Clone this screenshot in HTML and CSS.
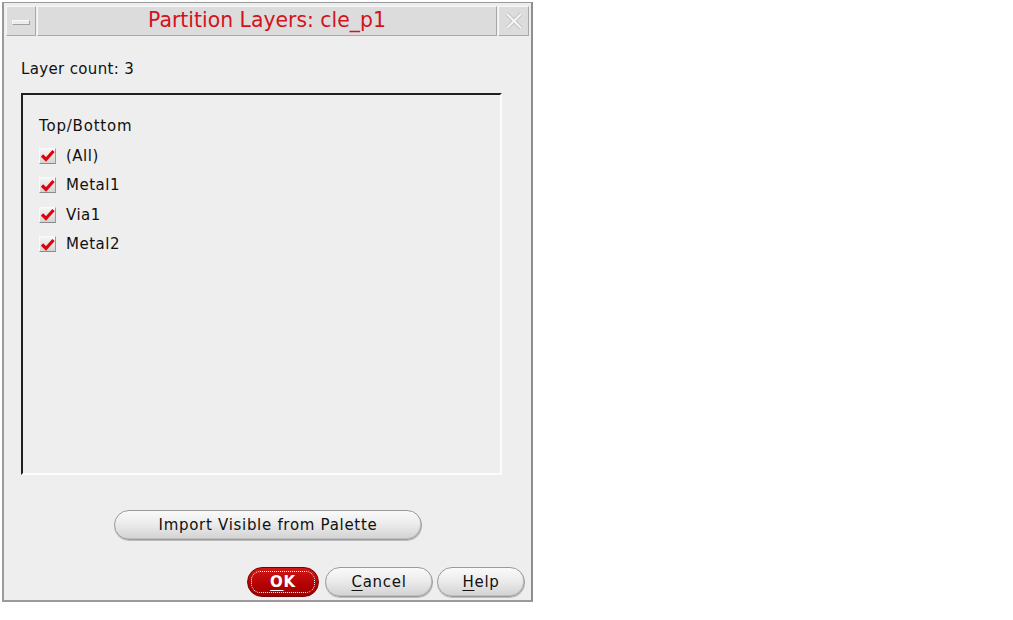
FILE: index.html
```html
<!DOCTYPE html>
<html>
<head>
<meta charset="utf-8">
<link rel="stylesheet" href="styles.css">
</head>
<body>
<div class="window">
  <div class="titlebar">
    <div class="tb-btn tb-min"><span class="min-bar"></span></div>
    <div class="tb-title">Partition Layers: cle_p1</div>
    <div class="tb-btn tb-close">
      <svg width="22" height="22" viewBox="0 0 22 22"><path d="M4 4 L18 18 M18 4 L4 18" stroke="#c4c4c4" stroke-width="4"/><path d="M4 4 L18 18 M18 4 L4 18" stroke="#f4f4f4" stroke-width="2"/></svg>
    </div>
  </div>
  <div class="body">
    <div class="count">Layer count: 3</div>
    <div class="panel">
      <div class="group-label">Top/Bottom</div>
      <div class="check-row"><span class="box"><svg width="15" height="13" viewBox="0 0 15 13"><path d="M2 6.5 L6 10.5 L13.5 2" fill="none" stroke="#e0000c" stroke-width="3.2"/></svg></span><span>(All)</span></div>
      <div class="check-row"><span class="box"><svg width="15" height="13" viewBox="0 0 15 13"><path d="M2 6.5 L6 10.5 L13.5 2" fill="none" stroke="#e0000c" stroke-width="3.2"/></svg></span><span>Metal1</span></div>
      <div class="check-row"><span class="box"><svg width="15" height="13" viewBox="0 0 15 13"><path d="M2 6.5 L6 10.5 L13.5 2" fill="none" stroke="#e0000c" stroke-width="3.2"/></svg></span><span>Via1</span></div>
      <div class="check-row"><span class="box"><svg width="15" height="13" viewBox="0 0 15 13"><path d="M2 6.5 L6 10.5 L13.5 2" fill="none" stroke="#e0000c" stroke-width="3.2"/></svg></span><span>Metal2</span></div>
    </div>
    <div class="import-row">
      <button class="pill import">Import Visible from Palette</button>
    </div>
    <div class="actions">
      <button class="pill ok"><span class="ok-inner"><u>O</u>K</span></button>
      <button class="pill cancel"><u>C</u>ancel</button>
      <button class="pill help"><u>H</u>elp</button>
    </div>
  </div>
</div>
</body>
</html>
```
FILE: styles.css
```css
html, body {
  margin: 0;
  padding: 0;
  background: #ffffff;
}
body {
  font-family: "DejaVu Sans", sans-serif;
  color: #111;
}
.window {
  margin: 2px 0 0 2px;
  width: 527px;
  height: 597px;
  border: 2px solid #9a9a9a;
  border-top-width: 1px;
  border-right-color: #8e8e8e;
  background: #eeeeee;
  display: flex;
  flex-direction: column;
  box-sizing: content-box;
}
.titlebar {
  display: flex;
  height: 30px;
  padding: 3px 2px 0 2px;
  gap: 1px;
}
.tb-btn, .tb-title {
  background: #dcdcdc;
  border: 1px solid #f8f8f8;
  border-right-color: #a8a8a8;
  border-bottom-color: #a8a8a8;
  box-sizing: border-box;
  height: 30px;
}
.tb-btn {
  width: 31px;
  display: flex;
  align-items: center;
  justify-content: center;
}
.tb-min {
  width: 30px;
}
.min-bar {
  width: 16px;
  height: 3px;
  background: #ececec;
  border: 1px solid #a0a0a0;
  border-top-color: #fafafa;
  border-left-color: #fafafa;
  margin-top: 3px;
}
.tb-title {
  flex: 1;
  text-align: center;
  color: #d4121c;
  font-size: 20.4px;
  line-height: 27px;
}
.body {
  flex: 1;
  display: flex;
  flex-direction: column;
  padding: 0 0 0 17px;
}
.count {
  font-size: 15px;
  letter-spacing: 0.35px;
  margin-top: 23px;
  height: 20px;
  line-height: 20px;
}
.panel {
  margin-top: 14px;
  width: 481px;
  height: 382px;
  box-sizing: border-box;
  border: 2px solid #202020;
  border-right: 2px solid #fcfcfc;
  border-bottom: 2px solid #fcfcfc;
  padding: 21px 0 0 16px;
  font-size: 15px;
  letter-spacing: 0.5px;
}
.group-label {
  height: 20px;
  line-height: 20px;
  margin-bottom: 5px;
  letter-spacing: 0.8px;
}
.check-row {
  display: flex;
  align-items: center;
  height: 29.5px;
  gap: 10px;
}
.box {
  width: 17px;
  height: 16px;
  box-sizing: border-box;
  border: 1px solid #fafafa;
  border-right-color: #9a9a9a;
  border-bottom-color: #8a8a8a;
  background: linear-gradient(#f6f6f6, #d4d4d4);
  display: flex;
  align-items: center;
  justify-content: center;
}
.import-row {
  margin-top: 35px;
  padding-left: 93px;
}
.pill {
  font-family: "DejaVu Sans", sans-serif;
  font-size: 15px;
  letter-spacing: 0.7px;
  color: #111;
  border: 1px solid #9a9a9a;
  border-radius: 15px;
  background: linear-gradient(#fafafa 0%, #ececec 45%, #d2d2d2 100%);
  box-shadow: inset -1px -1px 0 #c0c0c0, 0 1px 0 #bdbdbd;
  padding: 0;
  height: 30px;
}
.import {
  width: 308px;
}
.actions {
  margin-top: 27px;
  display: flex;
  gap: 5px;
  padding-left: 227px;
}
.ok {
  width: 72px;
  background: linear-gradient(#d01818, #b40000 60%, #9c0000);
  border-color: #7a0000;
  color: #fff;
  font-weight: bold;
  padding: 3px;
  box-shadow: none;
  margin-left: -1px;
}
.ok-inner {
  display: block;
  height: 100%;
  box-sizing: border-box;
  border: 1px dotted #ffffff;
  border-radius: 9px;
  line-height: 20px;
}
.cancel {
  width: 108px;
  margin-left: 1px;
}
.help {
  width: 88px;
  margin-left: -1px;
}
u {
  text-decoration: underline;
  text-underline-offset: 3px;
}
```
